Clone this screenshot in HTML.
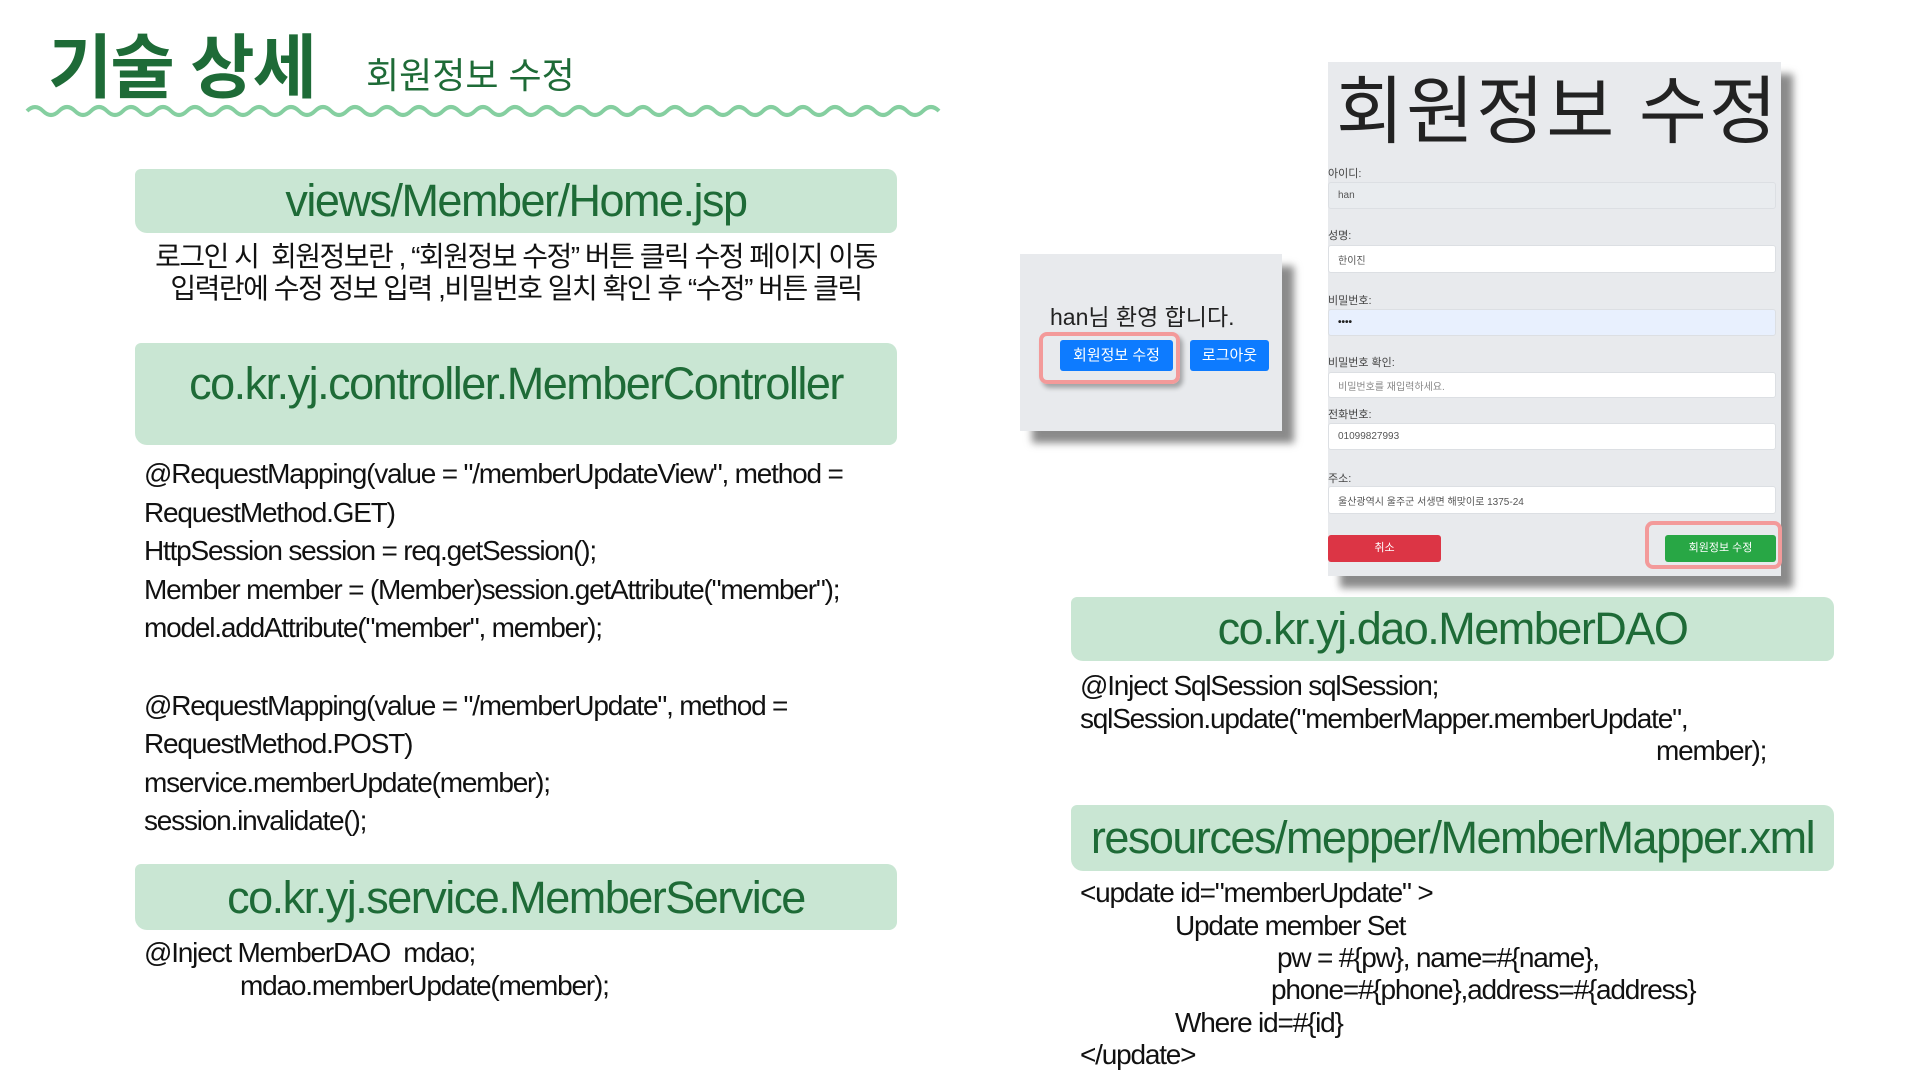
<!DOCTYPE html>
<html><head><meta charset="utf-8"><style>
*{margin:0;padding:0;box-sizing:border-box}
body{width:1920px;height:1080px;background:#fff;position:relative;overflow:hidden;font-family:"Liberation Sans","Noto Sans CJK KR",sans-serif;color:#111}
.a{position:absolute;white-space:nowrap}
.ban{position:absolute;background:#c9e6d3;border-radius:6px 10px 8px 12px}
.bt{position:absolute;white-space:nowrap;color:#1e6b37;font-size:45px;letter-spacing:-1.5px;text-align:center}
.code{font-size:28px;letter-spacing:-1.2px;color:#111}
.lbl{position:absolute;left:1328px;font-size:11px;color:#444}
.inp{position:absolute;left:1328px;width:448px;background:#fff;border:1px solid #dcdfe3;border-radius:3px;font-size:10px;color:#555;padding-left:9px;display:flex;align-items:center}
</style></head><body>
<div class="a" style="left:48px;top:12px;font-size:70px;font-weight:bold;color:#1e6b37;letter-spacing:-2px">기술 상세</div>
<div class="a" style="left:366px;top:47px;font-size:36px;color:#1e6b37">회원정보 수정</div>
<svg class="a" style="left:0;top:0" width="960" height="130"><path fill="none" stroke="#85cfa0" stroke-width="4" d="M27,111 q8,-8 16,0 t16,0 t16,0 t16,0 t16,0 t16,0 t16,0 t16,0 t16,0 t16,0 t16,0 t16,0 t16,0 t16,0 t16,0 t16,0 t16,0 t16,0 t16,0 t16,0 t16,0 t16,0 t16,0 t16,0 t16,0 t16,0 t16,0 t16,0 t16,0 t16,0 t16,0 t16,0 t16,0 t16,0 t16,0 t16,0 t16,0 t16,0 t16,0 t16,0 t16,0 t16,0 t16,0 t16,0 t16,0 t16,0 t16,0 t16,0 t16,0 t16,0 t16,0 t16,0 t16,0 t16,0 t16,0 t16,0 t16,0"/></svg>

<div class="ban" style="left:135px;top:169px;width:762px;height:64px"></div>
<div class="bt" style="left:135px;width:762px;top:175px">views/Member/Home.jsp</div>
<div class="a" style="left:135px;width:762px;text-align:center;top:241px;font-size:28px;letter-spacing:-1.5px;line-height:32px">로그인 시&nbsp; 회원정보란 , “회원정보 수정” 버튼 클릭 수정 페이지 이동<br>입력란에 수정 정보 입력 ,비밀번호 일치 확인 후 “수정” 버튼 클릭</div>

<div class="ban" style="left:135px;top:343px;width:762px;height:102px"></div>
<div class="bt" style="left:135px;width:762px;top:358px">co.kr.yj.controller.MemberController</div>
<div class="a code" style="left:144px;top:455px;line-height:38.6px">@RequestMapping(value = "/memberUpdateView", method =<br>RequestMethod.GET)<br>HttpSession session = req.getSession();<br>Member member = (Member)session.getAttribute("member");<br>model.addAttribute("member", member);<br><br>@RequestMapping(value = "/memberUpdate", method =<br>RequestMethod.POST)<br>mservice.memberUpdate(member);<br>session.invalidate();</div>

<div class="ban" style="left:135px;top:864px;width:762px;height:66px"></div>
<div class="bt" style="left:135px;width:762px;top:872px">co.kr.yj.service.MemberService</div>
<div class="a code" style="left:144px;top:937px">@Inject MemberDAO&nbsp; mdao;</div>
<div class="a code" style="left:240px;top:970px">mdao.memberUpdate(member);</div>

<!-- welcome panel -->
<div class="a" style="left:1032px;top:266px;width:262px;height:177px;background:#8a8a8a;filter:blur(4px)"></div>
<div class="a" style="left:1020px;top:254px;width:262px;height:177px;background:#e8eaed"></div>
<div class="a" style="left:1050px;top:298px;font-size:23px;color:#222">han님 환영 합니다.</div>
<div class="a" style="left:1039px;top:332px;width:141px;height:52px;border:4px solid #f39a9a;border-radius:8px;box-shadow:3px 4px 5px rgba(0,0,0,.3)"></div>
<div class="a" style="left:1060px;top:340px;width:113px;height:31px;background:#0d7bff;color:#fff;font-size:15px;text-align:center;line-height:31px;border-radius:3px">회원정보 수정</div>
<div class="a" style="left:1190px;top:340px;width:79px;height:31px;background:#0d7bff;color:#fff;font-size:15px;text-align:center;line-height:31px;border-radius:3px">로그아웃</div>

<!-- form panel -->
<div class="a" style="left:1340px;top:74px;width:453px;height:514px;background:#8a8a8a;filter:blur(4px)"></div>
<div class="a" style="left:1328px;top:62px;width:453px;height:514px;background:#e8eaed"></div>
<div class="a" style="left:1336px;top:52px;font-size:74px;color:#222;letter-spacing:2px">회원정보 수정</div>
<div class="lbl" style="top:165px">아이디:</div>
<div class="inp" style="top:182px;height:27px;background:#e9ecef">han</div>
<div class="lbl" style="top:227px">성명:</div>
<div class="inp" style="top:245px;height:28px">한이진</div>
<div class="lbl" style="top:292px">비밀번호:</div>
<div class="inp" style="top:309px;height:27px;background:#e8f0fe;font-weight:bold;color:#222">••••</div>
<div class="lbl" style="top:354px">비밀번호 확인:</div>
<div class="inp" style="top:372px;height:26px;color:#888">비밀번호를 재입력하세요.</div>
<div class="lbl" style="top:406px">전화번호:</div>
<div class="inp" style="top:423px;height:27px">01099827993</div>
<div class="lbl" style="top:470px">주소:</div>
<div class="inp" style="top:486px;height:28px">울산광역시 울주군 서생면 해맞이로 1375-24</div>
<div class="a" style="left:1328px;top:535px;width:113px;height:27px;background:#dc3545;color:#fff;font-size:11px;text-align:center;line-height:27px;border-radius:3px">취소</div>
<div class="a" style="left:1645px;top:521px;width:137px;height:48px;border:4px solid #f39a9a;border-radius:8px"></div>
<div class="a" style="left:1665px;top:535px;width:111px;height:27px;background:#28a745;color:#fff;font-size:11px;text-align:center;line-height:27px;border-radius:3px">회원정보 수정</div>

<div class="ban" style="left:1071px;top:597px;width:763px;height:64px"></div>
<div class="bt" style="left:1071px;width:763px;top:603px">co.kr.yj.dao.MemberDAO</div>
<div class="a code" style="left:1080px;top:670px">@Inject SqlSession sqlSession;</div>
<div class="a code" style="left:1080px;top:703px">sqlSession.update("memberMapper.memberUpdate",</div>
<div class="a code" style="left:1656px;top:735px">member);</div>

<div class="ban" style="left:1071px;top:805px;width:763px;height:66px"></div>
<div class="bt" style="left:1071px;width:763px;top:812px">resources/mepper/MemberMapper.xml</div>
<div class="a code" style="left:1080px;top:877px">&lt;update id="memberUpdate" &gt;</div>
<div class="a code" style="left:1175px;top:910px">Update member Set</div>
<div class="a code" style="left:1277px;top:942px">pw = #{pw}, name=#{name},</div>
<div class="a code" style="left:1271px;top:974px">phone=#{phone},address=#{address}</div>
<div class="a code" style="left:1175px;top:1007px">Where id=#{id}</div>
<div class="a code" style="left:1080px;top:1039px">&lt;/update&gt;</div>
</body></html>
